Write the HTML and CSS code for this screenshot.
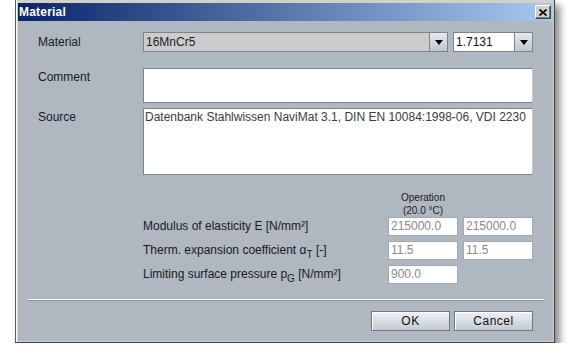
FILE: index.html
```html
<!DOCTYPE html>
<html lang="en">
<head>
    <meta charset="UTF-8">
    <title>Material</title>
    <link rel="stylesheet" href="styles.css">
</head>
<body>
    <div class="window">
        <div class="titlebar">
            <span class="title">Material</span>
            <button class="close-btn" aria-label="Close">
                <svg width="8" height="7" viewBox="0 0 8 7">
                    <path d="M0.5 0.5 L7.5 6.5 M7.5 0.5 L0.5 6.5" stroke="#000" stroke-width="1.6" fill="none"/>
                </svg>
            </button>
        </div>

        <div class="content">
            <div class="form-row center">
                <div class="label">Material</div>
                <div class="combo-row">
                    <div class="combo combo-wide">
                        <div class="combo-text disabled">16MnCr5</div>
                        <div class="combo-arrow"></div>
                    </div>
                    <div class="combo combo-small">
                        <div class="combo-text">1.7131</div>
                        <div class="combo-arrow"></div>
                    </div>
                </div>
            </div>

            <div class="form-row comment-row">
                <div class="label">Comment</div>
                <div class="textarea comment"></div>
            </div>

            <div class="form-row source-row">
                <div class="label">Source</div>
                <div class="textarea source">Datenbank Stahlwissen NaviMat 3.1, DIN EN 10084:1998-06, VDI 2230</div>
            </div>

            <div class="op-head">Operation<br>(20.0 °C)</div>

            <div class="values">
                <div class="value-label">Modulus of elasticity E [N/mm²]</div>
                <div class="value">215000.0</div>
                <div class="value">215000.0</div>

                <div class="value-label">Therm. expansion coefficient α<sub>T</sub> [-]</div>
                <div class="value">11.5</div>
                <div class="value">11.5</div>

                <div class="value-label">Limiting surface pressure p<sub>G</sub> [N/mm²]</div>
                <div class="value">900.0</div>
                <div></div>
            </div>

            <div class="separator"></div>

            <div class="buttons">
                <button class="dlg-btn">OK</button>
                <button class="dlg-btn">Cancel</button>
            </div>
        </div>
    </div>
</body>
</html>
```

FILE: styles.css
```css
* {
    box-sizing: border-box;
}

body {
    margin: 0;
    background: #ffffff;
    font-family: 'Liberation Sans', Arial, sans-serif;
    font-size: 12px;
    color: #1a1a1a;
}

.window {
    width: 540px;
    height: 343px;
    margin-left: 15px;
    background: #d4d0c8;
    border-left: 1px solid #5c5c5c;
    border-right: 1px solid #404040;
    border-bottom: 1px solid #404040;
    padding: 3px 1px 1px 2px;
    box-shadow: inset 1px 0 0 #ffffff, 5px 5px 7px rgba(0, 0, 0, 0.45);
    display: flex;
    flex-direction: column;
}

.titlebar {
    height: 18px;
    display: flex;
    align-items: center;
    justify-content: space-between;
    background: linear-gradient(to right, #0a246a, #a6caf0);
    padding: 0 2px 0 1px;
}

.title {
    color: #ffffff;
    font-weight: bold;
    font-size: 12px;
    letter-spacing: 0.2px;
}

.close-btn {
    width: 16px;
    height: 14px;
    padding: 0;
    background: #d4d0c8;
    border: 1px solid;
    border-color: #ffffff #404040 #404040 #ffffff;
    box-shadow: inset -1px -1px 0 #808080;
    display: flex;
    align-items: center;
    justify-content: center;
}

.content {
    flex: 1;
    background: #afb7c1;
    padding: 11px 20px 10px 20px;
    display: flex;
    flex-direction: column;
}

.form-row {
    display: flex;
    align-items: flex-start;
}

.form-row.center {
    align-items: center;
}

.comment-row {
    margin-top: 16px;
}

.source-row {
    margin-top: 5px;
}

.label {
    width: 105px;
    flex-shrink: 0;
    line-height: 19px;
}

.combo-row {
    display: flex;
    gap: 5px;
}

.combo {
    display: flex;
    height: 20px;
    border: 1px solid #7c848e;
}

.combo-wide {
    width: 305px;
}

.combo-small {
    width: 80px;
}

.combo-text {
    flex: 1;
    padding-left: 2px;
    line-height: 18px;
    background: #ffffff;
    color: #111;
}

.combo-text.disabled {
    background: #cccccc;
    color: #222;
}

.combo-arrow {
    width: 18px;
    border-left: 1px solid #7c848e;
    background: linear-gradient(#e6e9ee, #bec6d0);
    display: flex;
    align-items: center;
    justify-content: center;
}

.combo-arrow::after {
    content: '';
    border-left: 4px solid transparent;
    border-right: 4px solid transparent;
    border-top: 5px solid #000;
}

.textarea {
    width: 390px;
    background: #ffffff;
    border: 1px solid #7c848e;
    border-right-color: #c5cad0;
    padding: 1px 1px;
    line-height: 15px;
    color: #3c3c3c;
    white-space: nowrap;
    overflow: hidden;
}

.comment {
    height: 35px;
}

.source {
    height: 67px;
}

.op-head {
    margin-top: 16px;
    margin-left: 350px;
    width: 70px;
    text-align: center;
    font-size: 10px;
    line-height: 13px;
    color: #1a1a1a;
}

.values {
    display: grid;
    grid-template-columns: 240px 70px 70px;
    column-gap: 5px;
    row-gap: 5px;
    margin-left: 105px;
}

.value-label {
    height: 19px;
    line-height: 19px;
    white-space: nowrap;
}

.value-label sub {
    font-size: 10px;
    line-height: 0;
    vertical-align: -4px;
}

.value {
    height: 19px;
    border: 1px solid #a2a8b0;
    background: #ffffff;
    color: #8a8a8a;
    padding-left: 2px;
    line-height: 17px;
}

.separator {
    margin: 15px -11px 0 -10px;
    border-top: 1px solid #ffffff;
    border-bottom: 1px solid #8a929c;
}

.buttons {
    margin-top: 10px;
    display: flex;
    justify-content: flex-end;
    gap: 4px;
}

.dlg-btn {
    width: 79px;
    height: 20px;
    padding: 0;
    font-family: 'Liberation Sans', Arial, sans-serif;
    font-size: 12px;
    letter-spacing: 0.5px;
    color: #111;
    background: linear-gradient(#eef1f5, #c2cad4);
    border: 1px solid #6f7782;
    box-shadow: inset 1px 1px 0 #ffffff;
}
```
